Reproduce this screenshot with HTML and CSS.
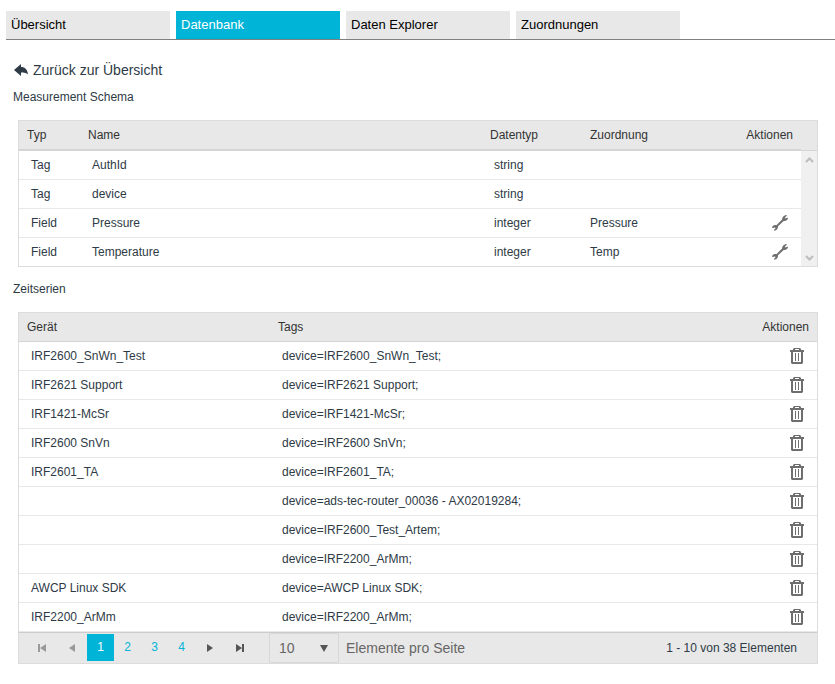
FILE: index.html
```html
<!DOCTYPE html>
<html lang="de">
<head>
<meta charset="utf-8">
<title>Datenbank</title>
<link rel="stylesheet" href="styles.css">
</head>
<body>
<svg class="sprite" aria-hidden="true">
  <symbol id="wrench" viewBox="0 0 16 16">
    <path d="M14.500 0L15 .6 12.800 2.700 13.400 3.600 15.600 2.600 16 3.300C15.400 5.400 13.600 6.300 11.700 5.900L6 11.300C6.200 13.400 4.700 15.400 2.500 15.700L1.900 15 3.600 13.300 3 12.400.6 13.100 0 12.500C.7 10.600 2.400 9.800 4.400 10.200L10.100 4.600C10 2.300 11.800.2 14.500 0z"/>
  </symbol>
  <symbol id="trash" viewBox="0 0 14 16">
    <path fill-rule="evenodd" d="M4 0h6l1 1v1h3v2h-1v11l-1 1H2l-1-1V4H0V2h3V1zM5 1v1h4V1zM3 4v10h8V4z"/>
    <path d="M5 5h1v8H5zM8 5h1v8H8z"/>
  </symbol>
</svg>
<nav class="tabs">
  <a class="tab" href="#">Übersicht</a>
  <a class="tab active" href="#" aria-current="page">Datenbank</a>
  <a class="tab" href="#">Daten Explorer</a>
  <a class="tab" href="#">Zuordnungen</a>
</nav>
<main>
  <a class="back" href="#">
    <svg width="14" height="12" viewBox="0 0 14 12" aria-hidden="true"><path d="M0 6L7 0v3c4 0 6.500 2.500 7 7.500C12.500 9 10.500 8.500 7 8.500V12z"/></svg>
    Zurück zur Übersicht
  </a>
  <h2>Measurement Schema</h2>
  <section class="grid scrolling">
    <table class="schema">
      <colgroup><col class="c-type"><col><col class="c-data"><col class="c-map"><col class="c-act"></colgroup>
      <thead><tr><th>Typ</th><th>Name</th><th>Datentyp</th><th>Zuordnung</th><th class="end">Aktionen</th></tr></thead>
      <tbody>
        <tr><td>Tag</td><td>AuthId</td><td>string</td><td class="map"></td><td class="end"></td></tr>
        <tr><td>Tag</td><td>device</td><td>string</td><td class="map"></td><td class="end"></td></tr>
        <tr><td>Field</td><td>Pressure</td><td>integer</td><td class="map">Pressure</td><td class="end"><button class="icon" aria-label="Bearbeiten"><svg width="16" height="16"><use href="#wrench"/></svg></button></td></tr>
        <tr><td>Field</td><td>Temperature</td><td>integer</td><td class="map">Temp</td><td class="end"><button class="icon" aria-label="Bearbeiten"><svg width="16" height="16"><use href="#wrench"/></svg></button></td></tr>
      </tbody>
    </table>
    <div class="rail" aria-hidden="true">
      <div class="corner"></div>
      <div class="track">
        <svg width="9" height="6" viewBox="0 0 9 6"><path d="M1 5l3.500-3.500L8 5"/></svg>
        <svg width="9" height="6" viewBox="0 0 9 6"><path d="M1 1l3.500 3.500L8 1"/></svg>
      </div>
    </div>
  </section>
  <h2>Zeitserien</h2>
  <section class="grid">
    <table class="series">
      <colgroup><col class="c-device"><col><col class="c-act"></colgroup>
      <thead><tr><th>Gerät</th><th>Tags</th><th class="end">Aktionen</th></tr></thead>
      <tbody>
        <tr><td>IRF2600_SnWn_Test</td><td>device=IRF2600_SnWn_Test;</td><td class="end"><button class="icon" aria-label="Löschen"><svg width="14" height="16"><use href="#trash"/></svg></button></td></tr>
        <tr><td>IRF2621 Support</td><td>device=IRF2621 Support;</td><td class="end"><button class="icon" aria-label="Löschen"><svg width="14" height="16"><use href="#trash"/></svg></button></td></tr>
        <tr><td>IRF1421-McSr</td><td>device=IRF1421-McSr;</td><td class="end"><button class="icon" aria-label="Löschen"><svg width="14" height="16"><use href="#trash"/></svg></button></td></tr>
        <tr><td>IRF2600 SnVn</td><td>device=IRF2600 SnVn;</td><td class="end"><button class="icon" aria-label="Löschen"><svg width="14" height="16"><use href="#trash"/></svg></button></td></tr>
        <tr><td>IRF2601_TA</td><td>device=IRF2601_TA;</td><td class="end"><button class="icon" aria-label="Löschen"><svg width="14" height="16"><use href="#trash"/></svg></button></td></tr>
        <tr><td></td><td>device=ads-tec-router_00036 - AX02019284;</td><td class="end"><button class="icon" aria-label="Löschen"><svg width="14" height="16"><use href="#trash"/></svg></button></td></tr>
        <tr><td></td><td>device=IRF2600_Test_Artem;</td><td class="end"><button class="icon" aria-label="Löschen"><svg width="14" height="16"><use href="#trash"/></svg></button></td></tr>
        <tr><td></td><td>device=IRF2200_ArMm;</td><td class="end"><button class="icon" aria-label="Löschen"><svg width="14" height="16"><use href="#trash"/></svg></button></td></tr>
        <tr><td>AWCP Linux SDK</td><td>device=AWCP Linux SDK;</td><td class="end"><button class="icon" aria-label="Löschen"><svg width="14" height="16"><use href="#trash"/></svg></button></td></tr>
        <tr><td>IRF2200_ArMm</td><td>device=IRF2200_ArMm;</td><td class="end"><button class="icon" aria-label="Löschen"><svg width="14" height="16"><use href="#trash"/></svg></button></td></tr>
      </tbody>
    </table>
    <div class="pager">
      <button class="step" disabled aria-label="Erste Seite"><svg width="8" height="8"><path d="M0 0h2v8H0zM8 0v8L2 4z"/></svg></button>
      <button class="step" disabled aria-label="Vorherige Seite"><svg width="8" height="8"><path d="M7 0v8L1 4z"/></svg></button>
      <div class="pages">
        <button class="page current" aria-current="page">1</button>
        <button class="page">2</button>
        <button class="page">3</button>
        <button class="page">4</button>
      </div>
      <button class="step" aria-label="Nächste Seite"><svg width="8" height="8"><path d="M1 0v8l6-4z"/></svg></button>
      <button class="step" aria-label="Letzte Seite"><svg width="8" height="8"><path d="M0 0v8l6-4zM6 0h2v8H6z"/></svg></button>
      <div class="size">
        <select id="size"><option>10</option><option>20</option><option>50</option></select>
        <svg class="caret" width="8" height="7" aria-hidden="true"><path d="M0 0h8L4 7z"/></svg>
      </div>
      <label for="size">Elemente pro Seite</label>
      <span class="info">1 - 10 von 38 Elementen</span>
    </div>
  </section>
</main>
</body>
</html>
```
FILE: styles.css
```css
* { box-sizing: border-box; }

body {
  margin: 0;
  padding: 11px 0 20px;
  background: #fff;
  color: #2e3a46;
  font: 12px/16px "Liberation Sans", Arial, sans-serif;
}

button, select { font: inherit; }

.sprite { display: none; }

.tabs {
  display: flex;
  gap: 6px;
  margin-left: 6px;
  border-bottom: 1px solid #808080;
}

.tab {
  width: 164px;
  height: 28px;
  padding: 0 5px;
  background: #e8e8e8;
  color: #000;
  font-size: 13px;
  line-height: 27px;
  text-decoration: none;
}

.tab.active { background: #00b4d8; color: #fff; }

main { padding: 22px 17px 0 18px; }

.back {
  display: flex;
  align-items: center;
  gap: 5px;
  width: max-content;
  margin-left: -4px;
  color: #2e3a46;
  font-size: 14px;
  text-decoration: none;
}

.back svg { fill: #2e3a46; }

h2 {
  margin: 11px 0 15px -5px;
  font-size: 12px;
  font-weight: normal;
}

.grid + h2 { margin-top: 14px; }

.grid { border: 1px solid #dcdcdc; }

.scrolling { display: flex; border-bottom: 0; }

.scrolling table { flex: 1; }

table {
  width: 100%;
  table-layout: fixed;
  border-collapse: separate;
  border-spacing: 0;
}

th {
  height: 29px;
  padding: 0 8px;
  background: #e8e8e8;
  border-bottom: 1px solid #d4d4d4;
  color: #333;
  font-weight: normal;
  text-align: left;
}

.schema th { height: 30px; border-bottom-width: 2px; }

td {
  height: 29px;
  padding: 0 12px;
  border-bottom: 1px solid #e8e8e8;
}

.schema tr:last-child td { border-bottom-color: #dcdcdc; }

td.map { padding-left: 8px; }

.end { text-align: right; }

td.end { padding-right: 13px; }

.c-type { width: 61px; }
.c-data { width: 100px; }
.c-map { width: 149px; }
.c-act { width: 70px; }
.c-device { width: 251px; }

.icon {
  display: inline-block;
  padding: 0;
  border: 0;
  background: none;
  vertical-align: middle;
}

.icon svg { display: block; fill: #6e6e6e; }

.rail {
  display: flex;
  flex-direction: column;
  width: 16px;
  border-bottom: 1px solid #dcdcdc;
}

.corner { height: 30px; background: #e8e8e8; border-bottom: 1px solid #d4d4d4; }

.track {
  display: flex;
  flex: 1;
  flex-direction: column;
  justify-content: space-between;
  align-items: center;
  padding: 6px 0 5px;
  background: #f0f0f0;
}

.track path { fill: none; stroke: #bdbdbd; stroke-width: 2; }

.pager {
  display: flex;
  align-items: center;
  height: 31px;
  padding: 0 20px 0 8px;
  background: #e8e8e8;
  border-top: 1px solid #ccc;
}

.step {
  display: flex;
  align-items: center;
  justify-content: center;
  width: 30px;
  height: 28px;
  padding: 0;
  border: 0;
  background: none;
}

.step svg { fill: #555; }
.step:disabled svg { fill: #999; }

.pages { display: flex; padding-bottom: 2px; }

.page {
  width: 27px;
  height: 27px;
  padding: 0;
  border: 0;
  background: none;
  color: #00b4d8;
}

.page.current { background: #00b4d8; color: #fff; }

.size { position: relative; margin: 0 7px 0 14px; }

.size select {
  display: block;
  width: 70px;
  height: 30px;
  padding: 0 9px;
  appearance: none;
  border: 1px solid #d8d8d8;
  border-radius: 2px;
  background: #e8e8e8;
  color: #666;
  font-size: 14px;
}

.caret { position: absolute; top: 12px; right: 11px; fill: #555; pointer-events: none; }

.pager label { color: #666; font-size: 14px; }

.info { margin-left: auto; }
```
